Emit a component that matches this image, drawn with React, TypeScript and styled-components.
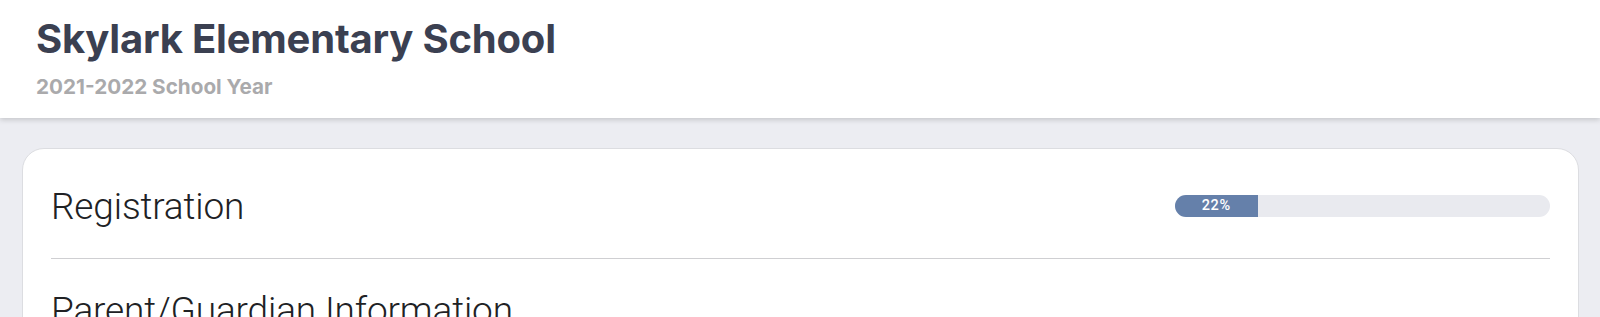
import React from "react";
import styled, { createGlobalStyle } from "styled-components";

const Global = createGlobalStyle`
  html, body { margin: 0; padding: 0; background: #ecedf2; }
  body { font-family: Inter, "Noto Sans", sans-serif; }
`;

const Header = styled.header`
  height: 118px;
  box-sizing: border-box;
  background: #ffffff;
  padding: 15px 36px 0;
  box-shadow: 0 2px 5px rgba(0, 0, 0, 0.16);
  position: relative;
  z-index: 1;
`;

const Title = styled.h1`
  margin: 0;
  font-family: Inter, sans-serif;
  font-weight: 700;
  font-size: 40px;
  line-height: 48px;
  letter-spacing: -0.2px;
  color: #3b4051;
`;

const Subtitle = styled.div`
  margin-top: 11px;
  font-family: Inter, sans-serif;
  font-weight: 700;
  font-size: 20.7px;
  line-height: 25px;
  color: #aaaaac;
`;

const Main = styled.main`
  padding: 30px 21px 0 22px;
`;

const Card = styled.section`
  background: #ffffff;
  border: 1px solid #dcdde1;
  border-radius: 22px;
  padding: 0 28px;
  min-height: 400px;
`;

const Row = styled.div<{ $divider?: boolean }>`
  display: flex;
  align-items: center;
  justify-content: space-between;
  padding: ${(p) => (p.$divider ? "36px 0 30px" : "30px 0")};
  border-bottom: ${(p) => (p.$divider ? "1px solid #cfcfd2" : "none")};
`;

const SectionTitle = styled.h2`
  margin: 0;
  font-family: Roboto, sans-serif;
  font-weight: 300;
  font-size: 37px;
  line-height: 43px;
  letter-spacing: -0.15px;
  color: #202124;
`;

const Track = styled.div`
  width: 375px;
  height: 22px;
  border-radius: 11px;
  background: #e9eaef;
  overflow: hidden;
  display: flex;
  margin-top: -1px;
`;

const Fill = styled.div`
  height: 100%;
  background: #6580aa;
  color: #ffffff;
  font-family: Roboto, sans-serif;
  font-weight: 500;
  font-size: 14.5px;
  letter-spacing: 0.6px;
  line-height: 22px;
  text-align: center;
`;

const percent = 22;

export default function App() {
  return (
    <>
      <Global />
      <Header>
        <Title>Skylark Elementary School</Title>
        <Subtitle>2021-2022 School Year</Subtitle>
      </Header>
      <Main>
        <Card>
          <Row $divider>
            <SectionTitle>Registration</SectionTitle>
            <Track>
              <Fill style={{ width: `${percent}%` }}>{percent}%</Fill>
            </Track>
          </Row>
          <Row>
            <SectionTitle>Parent/Guardian Information</SectionTitle>
          </Row>
        </Card>
      </Main>
    </>
  );
}
